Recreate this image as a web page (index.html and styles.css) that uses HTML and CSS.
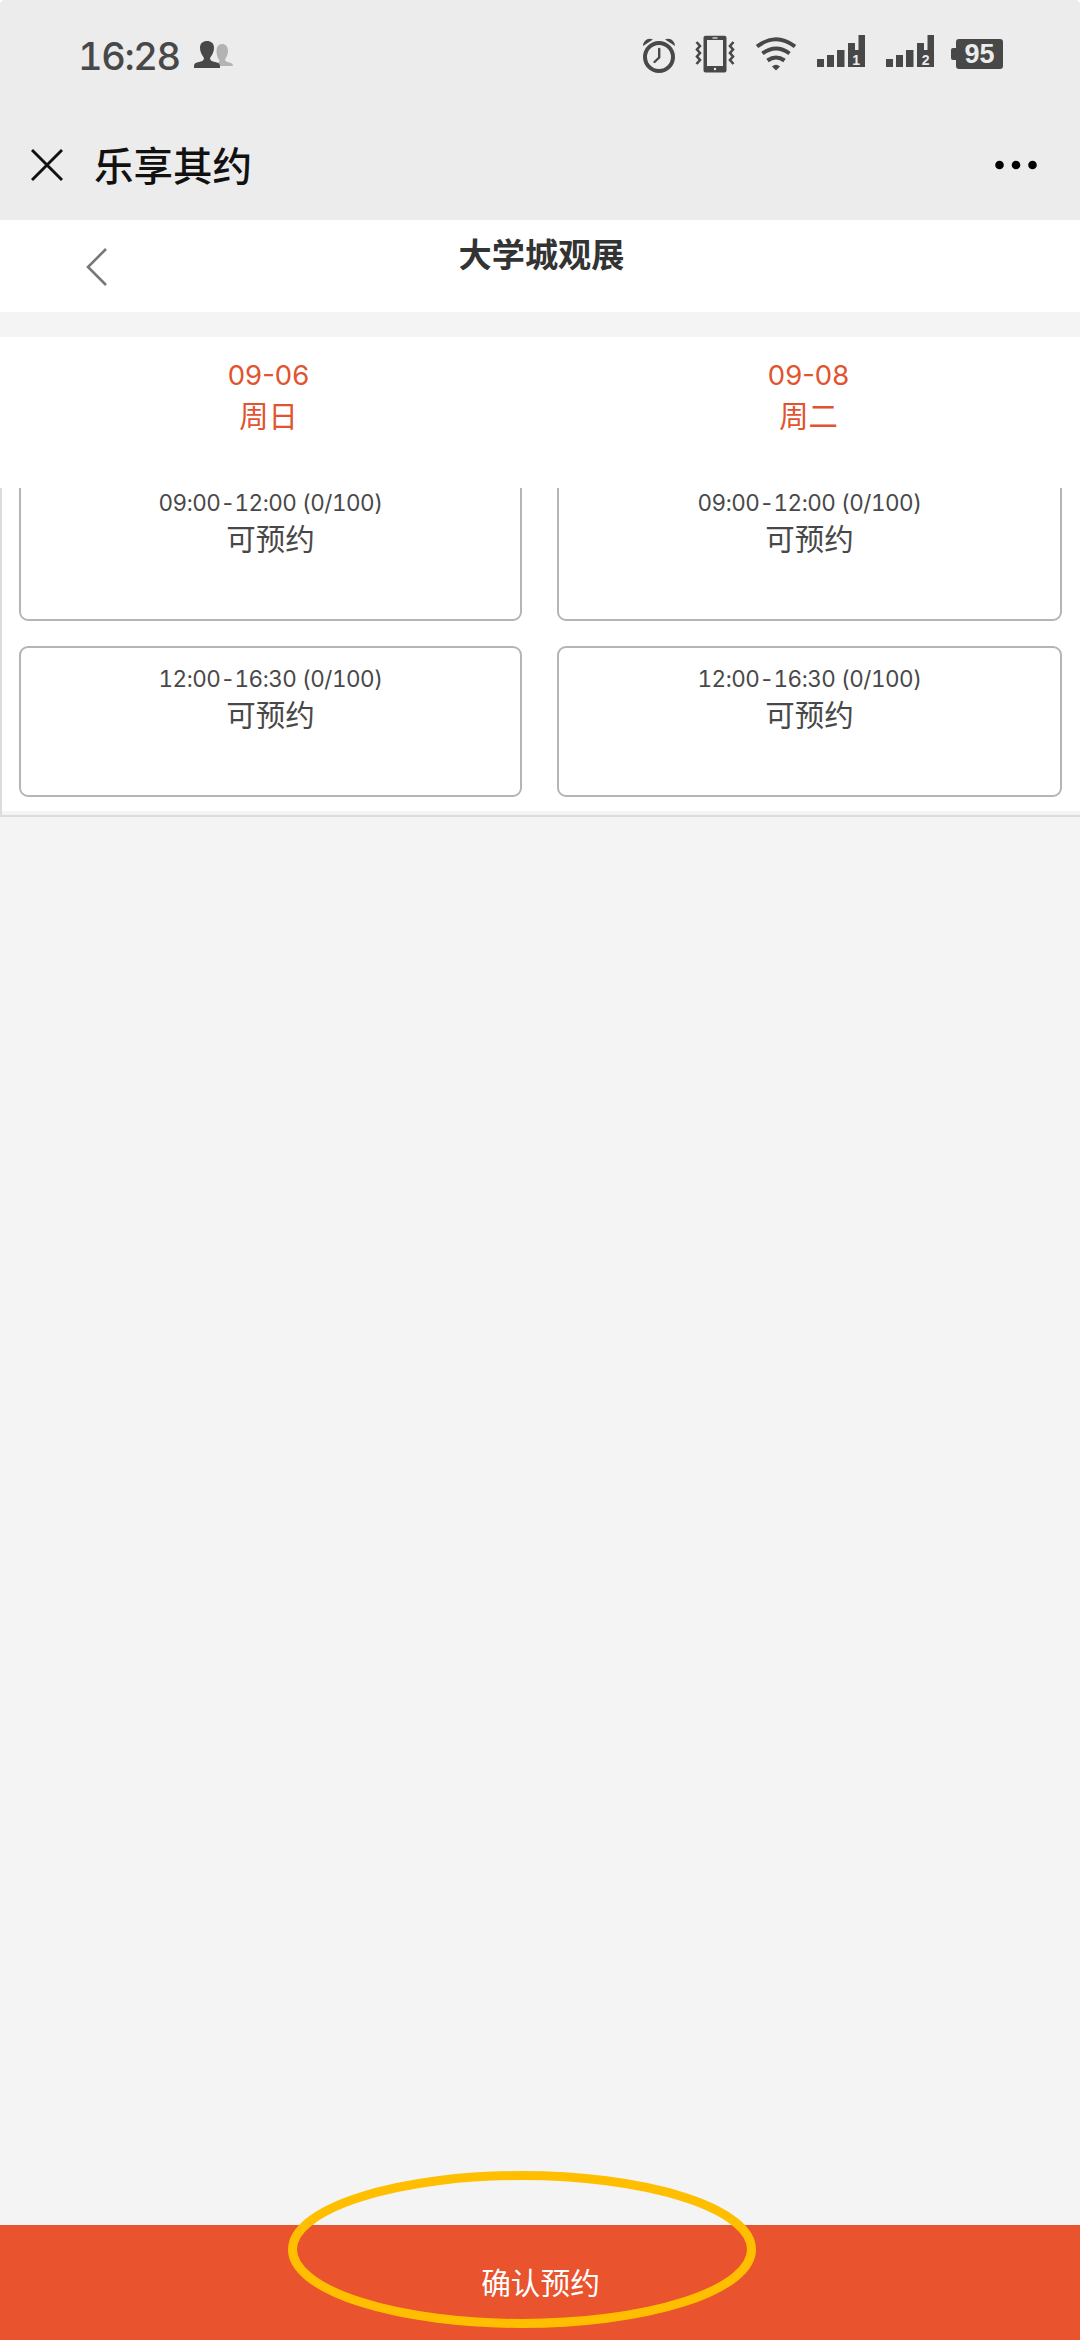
FILE: index.html
```html
<!DOCTYPE html>
<html lang="zh-CN">
<head>
<meta charset="utf-8">
<title>乐享其约</title>
<link rel="stylesheet" href="styles.css">
</head>
<body>
<header class="chrome">
  <div class="status">
    <span class="clock">16:28</span>
    <svg class="people" width="40" height="28" viewBox="194 41 40 28">
      <path fill="#b3b3b3" d="M214 66c1-2 5-2 5.500-5.500-2-2.500-3-6-3-9 0-4.500 2-7.500 5.500-7.500s6 2.500 6 7c0 3.500-1.500 6-3 8.500 0 4 8 1.500 8 6.500z"/>
      <path fill="#484848" d="M194 68v-2c0-6 10-2 10-8-2-3-4-6-4-10 0-5 3-7 7-7s7 2 7 7c0 4-2 7-4 10 0 6 10 2 10 8v2z"/>
    </svg>
    <div class="indicators">
      <svg class="alarm" width="34" height="36" viewBox="641 36 34 36" fill="none" stroke="#484848">
        <circle cx="658" cy="56" r="14" stroke-width="4"/>
        <path d="M658.200 48v8.500L653.500 61" stroke-width="2.400" stroke-linecap="round" stroke-linejoin="round"/>
        <path d="M642 45c0-5 5-9 10-6.500zM674 45c0-5-5-9-10-6.500z" fill="#484848" stroke="none"/>
      </svg>
      <svg class="vibrate" width="40" height="38" viewBox="694 34 40 38">
        <path fill="#484848" fill-rule="evenodd" d="M704.500 34.700h19a2 2 0 0 1 2 2v32.800a2 2 0 0 1-2 2h-19a2 2 0 0 1-2-2V36.700a2 2 0 0 1 2-2zM706 39v26h16V39z"/>
        <path d="M711.500 37h5" stroke="#ececec" stroke-width="1.200"/><circle cx="714" cy="68" r="1.200" fill="#ececec"/>
        <path d="M695.500 41l3.500 4-3 3.500 3 3.500-3 3.500 3 3.500-3.500 4M732.500 41l-3.500 4 3 3.500-3 3.500 3 3.500-3 3.500 3.500 4" fill="none" stroke="#484848" stroke-width="2.600"/>
      </svg>
      <svg class="wifi" width="40" height="34" viewBox="755 36 40 34" fill="none" stroke="#484848" stroke-width="4">
        <path d="M756 45.500Q775 31 794 45.500M761.500 52.500Q775 42.500 788.500 52.500M766.500 59.500Q775 53.500 783.500 59.500"/>
        <path d="M771 65.500Q775 62 779 65.500L775 69.500z" fill="#484848" stroke="none"/>
      </svg>
      <svg class="signal" width="48" height="33" viewBox="0 0 48 33">
        <path fill="#484848" d="M0 24h7v8H0zM10 20h7v12h-7zM20 15h7.500v17H20zM31 8h7v7h3.500V0H48v32H31z"/>
        <text x="39.200" y="29.500">1</text>
      </svg>
      <svg class="signal" width="48" height="33" viewBox="0 0 48 33">
        <path fill="#484848" d="M0 24h7v8H0zM10 20h7v12h-7zM20 15h7.500v17H20zM31 8h7v7h3.500V0H48v32H31z"/>
        <text x="39.700" y="29.500">2</text>
      </svg>
      <div class="battery"><i class="cap"></i><span class="charge">95</span></div>
    </div>
  </div>
  <div class="appbar">
    <svg width="32" height="32" viewBox="0 0 32 32"><path d="M1 1l30 30M31 1L1 31" stroke="#111" stroke-width="2.900"/></svg>
    <h1 class="app-title">乐享其约</h1>
    <svg class="more" width="42" height="10" viewBox="0 0 42 10"><circle cx="4.500" cy="5" r="4.300"/><circle cx="21" cy="5" r="4.300"/><circle cx="37.500" cy="5" r="4.300"/></svg>
  </div>
</header>
<section class="heading">
  <svg class="back" width="22" height="40" viewBox="0 0 22 40"><path d="M20 2L2 20 20 38" fill="none" stroke="#777" stroke-width="2.600"/></svg>
  <h2 class="page-title">大学城观展</h2>
</section>
<section class="dates">
  <div class="date"><span class="day">09-06</span><span>周日</span></div>
  <div class="date"><span class="day">09-08</span><span>周二</span></div>
</section>
<main class="slots">
  <div class="column">
    <div class="slot"><span class="time">09:00-12:00 (0/100)</span><span class="state">可预约</span></div>
    <div class="slot"><span class="time">12:00-16:30 (0/100)</span><span class="state">可预约</span></div>
  </div>
  <div class="column">
    <div class="slot"><span class="time">09:00-12:00 (0/100)</span><span class="state">可预约</span></div>
    <div class="slot"><span class="time">12:00-16:30 (0/100)</span><span class="state">可预约</span></div>
  </div>
</main>
<footer class="confirm">确认预约
  <svg class="ring" width="468" height="157" viewBox="0 0 468 157"><ellipse cx="234" cy="78.500" rx="229.500" ry="74" fill="none" stroke="#ffbf00" stroke-width="9"/></svg>
</footer>
</body>
</html>
```

FILE: styles.css
```css
* { box-sizing: border-box; }
html { background: #fff; }
body {
  margin: 0;
  width: 1080px;
  height: 2340px;
  display: flex;
  flex-direction: column;
  background: #f4f4f4;
  border-radius: 5px 5px 0 0;
  font-family: Inter, "Noto Sans CJK SC", sans-serif;
  color: #484848;
  overflow: hidden;
}
svg { display: block; flex: none; }
h1, h2 { margin: 0; }
.chrome { height: 220px; background: #ececec; flex: none; }
.status { height: 110px; display: flex; align-items: center; padding: 0 77px 0 78px; }
.clock { width: 116px; font-size: 38px; font-weight: 500; font-variant-numeric: tabular-nums; letter-spacing: -1.4px; line-height: 40px; padding-top: 2px; }
.indicators { margin-left: auto; display: flex; align-items: center; }
.vibrate { margin-left: 19px; margin-top: -2px; }
.wifi { margin-left: 21px; margin-top: -3px; }
.signal { margin-left: 21px; margin-top: -7px; }
.signal text { font: bold 14px "Liberation Sans", sans-serif; fill: #ececec; text-anchor: middle; }
.battery { display: flex; align-items: center; margin-left: 17px; margin-top: -2px; }
.cap { width: 5px; height: 12px; background: #484848; border-radius: 2px 0 0 2px; }
.charge {
  width: 47px;
  height: 30px;
  border-radius: 3px;
  background: #484848;
  color: #ececec;
  font: bold 27px/31px "Liberation Sans", sans-serif;
  text-align: center;
}
.appbar { height: 110px; display: flex; align-items: center; padding: 0 43px 0 31px; }
.app-title { margin-left: 31px; padding-top: 3px; font-size: 39.5px; font-weight: 500; line-height: 60px; color: #111; }
.more { margin-left: auto; }
.heading { height: 92px; flex: none; background: #fff; display: grid; grid-template-columns: 1fr auto 1fr; padding: 12px 0 0 3px; }
.back { margin: 15px 0 0 83px; }
.page-title { font-size: 33.2px; line-height: 46px; font-weight: 700; color: #333; }
.dates { height: 151px; flex: none; margin-top: 25px; background: #fff; display: grid; grid-template-columns: 1fr 1fr; }
.date { display: flex; flex-direction: column; align-items: center; padding: 17px 3px 0 0; font-size: 29.3px; line-height: 42px; color: #e2532f; }
.day { font-size: 27.5px; }
.slots {
  height: 329px;
  flex: none;
  overflow: hidden;
  display: grid;
  grid-template-columns: 503px 505px;
  column-gap: 35px;
  padding-left: 17px;
  border-left: 2px solid #dcdcdc;
  border-bottom: 2px solid #dcdcdc;
  background: linear-gradient(#fff 323px, #f4f4f4 323px);
}
.column { display: flex; flex-direction: column; gap: 25px; margin-top: -18px; }
.slot {
  height: 151px;
  flex: none;
  display: flex;
  flex-direction: column;
  align-items: center;
  padding-top: 13px;
  border: 2px solid #b5b5b5;
  border-radius: 9px;
  background: #fff;
}
.time { font-size: 22.5px; line-height: 36px; font-variant-numeric: tabular-nums; letter-spacing: -0.5px; }
.state { font-size: 29.5px; line-height: 37px; }
.confirm {
  position: relative;
  height: 115px;
  flex: none;
  margin-top: auto;
  padding: 0 0 3px 1px;
  display: flex;
  align-items: center;
  justify-content: center;
  background: #e9532d;
  color: #fff;
  font-size: 29.7px;
}
.ring { position: absolute; left: 288px; top: -54px; }
```
